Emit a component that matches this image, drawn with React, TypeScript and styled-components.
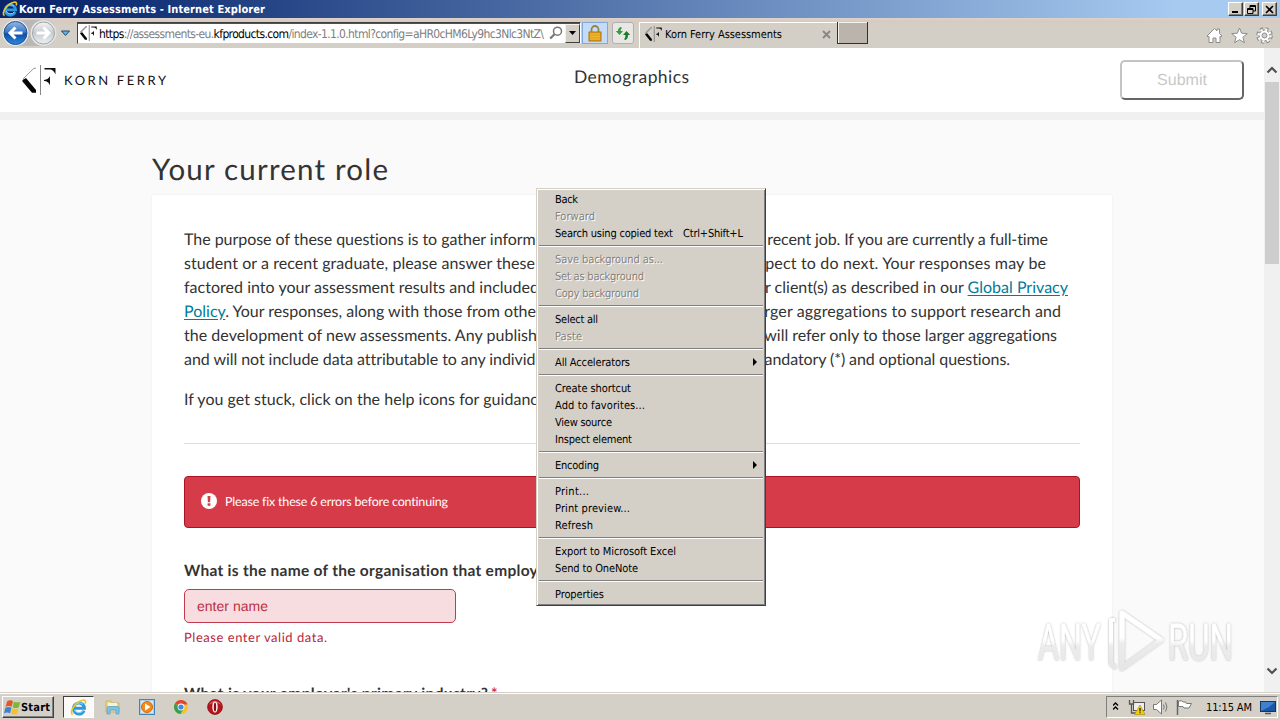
import React, { FC, ReactNode, useLayoutEffect, useRef, useState } from "react";
import styled, { createGlobalStyle, css } from "styled-components";

const GlobalStyle = createGlobalStyle`
  * {
    box-sizing: border-box;
  }
  body {
    margin: 0;
    overflow: hidden;
    text-rendering: geometricPrecision;
  }
  svg {
    display: block;
    flex: none;
  }
`;

const uiFont = css`
  font-family: "DejaVu Sans Condensed", "DejaVu Sans", sans-serif;
  font-stretch: condensed;
`;

const pageFont = css`
  font-family: Lato, sans-serif;
`;

const FitText = styled.span`
  display: inline-block;
  white-space: pre;
`;

interface FitProps {
  width: number;
  children: ReactNode;
}

// Tracks the text out (or in) until it is exactly `width` wide.
const Fit: FC<FitProps> = ({ width, children }) => {
  const ref = useRef<HTMLSpanElement>(null);
  const [spacing, setSpacing] = useState(0);

  useLayoutEffect(() => {
    const el = ref.current;
    if (!el) return;
    el.style.letterSpacing = "0px";
    const count = (el.textContent || "").length;
    const value = (width - el.getBoundingClientRect().width) / (count - 1);
    el.style.letterSpacing = `${value}px`;
    setSpacing(value);
  }, [width]);

  return (
    <FitText
      ref={ref}
      style={{ letterSpacing: spacing, marginRight: -spacing }}
    >
      {children}
    </FitText>
  );
};

const Screen = styled.div`
  position: relative;
  width: 1280px;
  height: 720px;
  display: flex;
  flex-direction: column;
  overflow: hidden;
  background: #d4d0c8;
`;

/* title bar */

const TitleBar = styled.div`
  height: 18px;
  flex: none;
  display: flex;
  align-items: center;
  padding: 0 3px 0 2px;
  color: #fff;
  background: linear-gradient(90deg, #0a246a 0%, #0e2c72 8%, #a6caf0 92%);
  ${uiFont}
  font-size: 11px;
  font-weight: 700;
`;

const TitleText = styled.div`
  flex: 1;
  margin-left: 1px;
`;

const WindowButton = styled.div<{ gap?: number }>`
  width: 15px;
  height: 14px;
  margin-left: ${({ gap = 0 }) => gap}px;
  display: flex;
  align-items: center;
  justify-content: center;
  background: #d4d0c8;
  border: 1px solid;
  border-color: #fff #404040 #404040 #fff;
  box-shadow: inset -1px -1px 0 #808080;
`;

/* toolbar */

const Toolbar = styled.div`
  height: 30px;
  flex: none;
  display: flex;
  align-items: flex-start;
  padding: 4px 7px 0 2px;
  background: linear-gradient(#dcd3cb 0, #d8cac0 3px, #d4cfc6 9px, #d4cfc6);
  ${uiFont}
  font-size: 11px;
`;

const NavButtons = styled.div`
  width: 75px;
  margin-top: -3px;
`;

const AddressBar = styled.div`
  width: 504px;
  height: 22px;
  display: flex;
  align-items: center;
  padding-left: 2px;
  background: #fff;
  border: 1px solid;
  border-color: #404040 #fff #d4d0c8 #404040;
  box-shadow: inset 0 1px 0 #5b4a5c;
  font-size: 12px;
`;

const Url = styled.div`
  flex: 1;
  margin-left: 2px;
  padding-top: 1px;
  color: #808080;
  b {
    color: #000;
    font-weight: 400;
  }
`;

const DropButton = styled.div`
  width: 15px;
  height: 19px;
  margin-left: 2px;
  display: flex;
  align-items: center;
  justify-content: center;
  background: #d4d0c8;
  border: 1px solid;
  border-color: #f4f2ee #404040 #404040 #f4f2ee;
`;

const ToolButton = styled.div<{ active?: boolean }>`
  width: ${({ active }) => (active ? 26 : 22)}px;
  height: 22px;
  margin-left: ${({ active }) => (active ? 1 : 4)}px;
  display: flex;
  align-items: center;
  justify-content: center;
  background: ${({ active }) => (active ? "#c4dcf8" : "#e9e7e3")};
  border: 1px solid ${({ active }) => (active ? "#7fa9dc" : "#aeb0b4")};
  border-radius: ${({ active }) => (active ? 0 : 3)}px;
`;

const Tab = styled.div`
  width: 198px;
  height: 26px;
  margin-left: 5px;
  padding: 0 6px 3px 5px;
  display: flex;
  align-items: center;
  border-top: 1px solid #fff;
  border-left: 1px solid #fff;
`;

const TabTitle = styled.div`
  flex: 1;
  margin-left: 3px;
`;

const NewTab = styled.div`
  width: 31px;
  height: 22px;
  background: #bab4ac;
  border: solid #303030;
  border-width: 0 1px 1px 1px;
  box-shadow: inset 1px 1px 0 #f4f0ea;
`;

const ToolIcons = styled.div`
  margin-left: auto;
  margin-top: 5px;
  display: flex;
  gap: 8px;
`;

/* page */

const Viewport = styled.div`
  height: 644px;
  flex: none;
  display: flex;
  overflow: hidden;
  background: #fafafa;
`;

const Page = styled.div`
  width: 1264px;
  color: #333;
  ${pageFont}
`;

const PageHeader = styled.div`
  height: 72px;
  display: grid;
  grid-template-columns: 1fr 116px 1fr;
  align-items: center;
  padding: 0 20px 0 22px;
  background: #fff;
  border-bottom: 8px solid #f0f0f0;
`;

const Brand = styled.div`
  display: flex;
  align-items: center;
  margin-top: -1px;
  color: #111;
  font-size: 13px;
`;

const BrandName = styled.div`
  margin-left: 8px;
`;

const PageTitle = styled.div`
  margin: -7px 0 0 -1px;
  font-size: 17.5px;
  color: #333;
`;

const SubmitButton = styled.div`
  width: 124px;
  height: 40px;
  justify-self: end;
  display: flex;
  align-items: center;
  justify-content: center;
  padding-top: 1px;
  border: 2px solid;
  border-color: #c4c4c4 #666 #666 #c4c4c4;
  border-radius: 5px;
  color: #c8c8c8;
  font-family: "Liberation Sans", sans-serif;
  font-size: 16px;
`;

const Section = styled.div`
  width: 960px;
  margin-left: 152px;
`;

const Heading = styled.h1`
  height: 75px;
  margin: 0;
  padding-top: 31px;
  font-size: 29.5px;
  line-height: 38px;
  font-weight: 400;
`;

const Card = styled.div`
  height: 560px;
  padding: 33px 32px 0;
  background: #fff;
  box-shadow: 0 0 3px rgba(0, 0, 0, 0.06);
`;

const Line = styled.div<{ width: number }>`
  width: ${({ width }) => width}px;
  height: 24px;
  display: flex;
  justify-content: space-between;
  font-size: 16px;
  line-height: 24px;
  white-space: pre;
`;

const Link = styled.a`
  color: #007b9a;
  text-decoration: underline;
  text-underline-offset: 2px;
`;

const Divider = styled.div`
  height: 1px;
  margin: 31px 0 32px;
  background: #ddd;
`;

const Alert = styled.div`
  height: 52px;
  display: flex;
  align-items: center;
  padding: 0 16px 3px;
  color: #fff;
  background: #d63b49;
  border: 1px solid #ab1323;
  border-radius: 4px;
  font-size: 12.5px;
`;

const AlertText = styled.div`
  margin-left: 8px;
  padding-top: 2px;
`;

const Label = styled.div<{ top: number }>`
  margin-top: ${({ top }) => top}px;
  font-size: 15.5px;
  line-height: 20px;
  font-weight: 700;
  white-space: pre;
`;

const Required = styled.span`
  margin-left: 3px;
  color: #d63b49;
`;

const Field = styled.div`
  width: 272px;
  height: 34px;
  margin-top: 8px;
  padding: 0 12px;
  display: flex;
  align-items: center;
  color: #bc3043;
  background: #f8dde0;
  border: 1px solid #c23a4d;
  border-radius: 5px;
  font-family: "Liberation Sans", sans-serif;
  font-size: 14px;
`;

const FieldError = styled.div`
  margin-top: 4px;
  color: #b8273a;
  font-size: 13px;
  line-height: 20px;
`;

/* scroll bar */

const ScrollBar = styled.div`
  width: 16px;
  padding: 18px 0 17px;
  display: flex;
  flex-direction: column;
  align-items: center;
  background: #f0f0f0;
`;

const Thumb = styled.div`
  width: 14px;
  height: 182px;
  margin-top: 8px;
  margin-bottom: auto;
  background: #cdcdcd;
`;

/* context menu */

const Menu = styled.div`
  position: absolute;
  left: 536px;
  top: 188px;
  width: 230px;
  height: 418px;
  padding: 1px;
  background: #d4d0c8;
  border: 1px solid;
  border-color: #d4d0c8 #404040 #404040 #d4d0c8;
  box-shadow: inset 1px 1px 0 #fff, inset -1px -1px 0 #808080;
  color: #000;
  ${uiFont}
  font-size: 11px;
`;

const MenuBody = styled.div`
  padding-top: 1px;
`;

const MenuItem = styled.div<{ disabled?: boolean }>`
  height: 17px;
  padding: 0 7px 0 17px;
  display: flex;
  align-items: center;
  gap: 10px;
  line-height: 17px;
  ${({ disabled }) =>
    disabled &&
    css`
      color: #85827d;
      text-shadow: 1px 1px 0 #fff;
    `}
`;

const MenuArrow = styled.div`
  margin: -2px 0 0 auto;
  border: 4px solid transparent;
  border-left: 4px solid #000;
  border-right: 0;
`;

const MenuSeparator = styled.div`
  height: 2px;
  margin: 3px 1px 4px;
  border-top: 1px solid #808080;
  border-bottom: 1px solid #fff;
`;

/* taskbar */

const Taskbar = styled.div`
  height: 28px;
  display: flex;
  align-items: flex-start;
  padding: 3px 2px 0;
  background: #d4d0c8;
  border-top: 1px solid #d4d0c8;
  box-shadow: inset 0 1px 0 #fff;
  ${uiFont}
  font-size: 11px;
`;

const StartButton = styled.div`
  width: 52px;
  height: 22px;
  display: flex;
  align-items: center;
  padding-left: 1px;
  font-weight: 700;
  border: 1px solid;
  border-color: #fff #404040 #404040 #fff;
  box-shadow: inset -1px -1px 0 #808080;
`;

const QuickLaunch = styled.div`
  margin-left: 9px;
  display: flex;
  align-items: center;
  gap: 18px;
`;

const ActiveTask = styled.div`
  width: 31px;
  height: 22px;
  margin-right: -7px;
  display: flex;
  align-items: center;
  justify-content: center;
  background: #fbfaf8;
  border: 1px solid;
  border-color: #404040 #fff #fff #404040;
`;

const Tray = styled.div`
  width: 172px;
  height: 22px;
  margin-left: auto;
  padding: 0 2px 0 6px;
  display: flex;
  align-items: center;
  border: 1px solid;
  border-color: #808080 #fff #fff #808080;
`;

const Clock = styled.div`
  width: 47px;
  margin: 0 8px 0 9px;
`;

const WatermarkBox = styled.div`
  position: absolute;
  left: 1030px;
  top: 604px;
`;

/* icons */

const IeIcon: FC<{ size: number }> = ({ size }) => (
  <svg width={size} height={size} viewBox="0 0 16 16" fill="none">
    <path
      d="M13.2 11A5.2 5.2 0 1 1 13.6 8.8H4.2"
      stroke="#2f97dc"
      strokeWidth="2.8"
    />
    <path
      d="M12.5 10.8A4.9 4.9 0 0 1 4 10M4 7a5 5 0 0 1 8-2"
      stroke="#8ad6fa"
      strokeWidth="1"
    />
    <path
      d="M2.5 14.6C-1.5 12.5 5.5 2.2 12 1.2c2.8-.4 3 1.4 2.1 3.3"
      stroke="#efc42e"
      strokeWidth="1.6"
    />
  </svg>
);

interface KfMarkProps {
  width: number;
  height: number;
}

const KfMark: FC<KfMarkProps> = ({ width, height }) => (
  <svg
    width={width}
    height={height}
    viewBox="0 0 34 30"
    preserveAspectRatio="none"
  >
    <path d="M.5 15L4 13l10 12v2.800h-4L.5 16.500z" fill="#050505" />
    <path d="M1 14L12 3.200h2" stroke="#999" strokeWidth={width > 20 ? 1 : 3} fill="none" />
    <path d="M18.500 0v30" stroke="#888" strokeWidth={width > 20 ? 1 : 2} />
    <path d="M22.500 3H33.500v6.500q-2-4.500-5-5h-6z" fill="#111" />
    <path d="M22 15q4.500-.5 6-4v9.500q-1.500-4.500-6-4.500z" fill="#111" />
  </svg>
);

const NavIcon = () => (
  <svg width="72" height="28" viewBox="0 0 72 28">
    <defs>
      <linearGradient id="back" x1="0" y1="0" x2="0" y2="1">
        <stop offset="0" stopColor="#91b8e5" />
        <stop offset=".46" stopColor="#3a78c8" />
        <stop offset=".54" stopColor="#0e4ba6" />
        <stop offset="1" stopColor="#2b8de0" />
      </linearGradient>
      <linearGradient id="forward" x1="0" y1="0" x2="0" y2="1">
        <stop offset="0" stopColor="#f4f5f6" />
        <stop offset=".5" stopColor="#c6cbd1" />
        <stop offset="1" stopColor="#eef1f4" />
      </linearGradient>
    </defs>
    <path d="M13 1h28q13 0 13 13T41 27H13z" fill="#b9b8b7" />
    <circle cx="13.500" cy="14" r="13" fill="#e9edf2" />
    <circle cx="41.500" cy="14" r="13" fill="#e4e4e4" />
    <circle cx="13.500" cy="14" r="11.500" fill="url(#back)" stroke="#274f8c" />
    <circle cx="41.500" cy="14" r="11" fill="url(#forward)" stroke="#a0a3a8" />
    <path
      d="M20.500 14H8M13.500 8.500L8 14l5.500 5.500"
      stroke="#fff"
      strokeWidth="3"
      fill="none"
    />
    <path
      d="M34.500 14h12M41.500 8.500l5.500 5.500-5.500 5.500"
      stroke="#fff"
      strokeWidth="3"
      fill="none"
    />
    <path d="M59.500 12h8l-4 4.500z" fill="#5fb5e8" stroke="#25496e" />
  </svg>
);

const SearchIcon = () => (
  <svg width="14" height="14" viewBox="0 0 14 14" fill="none" stroke="#777">
    <circle cx="8.500" cy="5.200" r="4" strokeWidth="1.500" />
    <path d="M5.500 8.200L1.200 12.600" strokeWidth="2.200" />
  </svg>
);

const LockIcon = () => (
  <svg width="14" height="17" viewBox="0 0 14 17">
    <path
      d="M3.500 8V4.500a3.500 3.500 0 0 1 7 0V8"
      fill="none"
      stroke="#9b8348"
      strokeWidth="1.800"
    />
    <rect x="1" y="7" width="12" height="9" fill="#e8a317" stroke="#a87415" />
    <path d="M2 9h10M2 11.500h10M2 14h10" stroke="#f4bf3c" strokeWidth=".8" />
  </svg>
);

const RefreshIcon = () => (
  <svg width="16" height="16" viewBox="0 0 16 16">
    <path d="M6 2q-3 .5-3 4H.8L4.500 10 8 6H5.500Q5.500 4 7 3z" fill="#2f9e3d" />
    <path d="M10 15q3-.5 3-5h2.200L11.500 6 8 10h2.500q0 3-1.500 4z" fill="#177d28" />
  </svg>
);

const HomeIcon = () => (
  <svg width="17" height="17" viewBox="0 0 17 17">
    <path
      d="M1 9l7.500-7.500L11 4V2h2.500v4.500L16 9l-1.200 1L14 9.300V15.500h-4V11H7v4.500H3V9.300L2.200 10z"
      fill="#fff"
      stroke="#8c8c8c"
    />
  </svg>
);

const StarIcon = () => (
  <svg width="17" height="17" viewBox="0 0 17 17">
    <path
      d="M8.500 1l2.100 5.200 5.700.4-4.400 3.600 1.500 5.500-4.900-3-4.900 3 1.500-5.500L.7 6.600l5.700-.4z"
      fill="#fff"
      stroke="#8c8c8c"
    />
  </svg>
);

const GearIcon = () => (
  <svg width="17" height="17" viewBox="0 0 17 17" fill="none">
    <circle cx="8.500" cy="8.500" r="6.500" stroke="#8c8c8c" strokeWidth="3.600" strokeDasharray="3 2.105" />
    <circle cx="8.500" cy="8.500" r="5.400" fill="#fff" stroke="#8c8c8c" strokeWidth="1" />
    <circle cx="8.500" cy="8.500" r="6" stroke="#fff" strokeWidth="2.400" strokeDasharray="2 2.712" />
    <circle cx="8.500" cy="8.500" r="2.500" fill="#d4cfc6" stroke="#8c8c8c" />
  </svg>
);

const Chevron: FC<{ down?: boolean }> = ({ down }) => (
  <svg width="12" height="8" viewBox="0 0 12 8">
    <path
      d={down ? "M1.500 1.500L6 6l4.500-4.500" : "M1.500 6.500L6 2l4.500 4.500"}
      fill="none"
      stroke="#505050"
      strokeWidth="2.200"
    />
  </svg>
);

const AlertIcon = () => (
  <svg width="16" height="16" viewBox="0 0 16 16">
    <circle cx="8" cy="8" r="8" fill="#fff" />
    <path d="M6.500 3h3l-.4 6.200H6.900z" fill="#d63b49" />
    <rect x="6.600" y="10.300" width="2.800" height="2.500" fill="#d63b49" />
  </svg>
);

const WindowsIcon = () => (
  <svg width="17" height="17" viewBox="0 0 16 16">
    <path d="M3 2q3-1.500 5.500 0L7.200 7.300Q4.500 6 1.500 7.300z" fill="#e5562d" />
    <path d="M9.300 2.500q3 1.300 6 0L13.800 8q-3 1.200-5.700-.3z" fill="#7db73a" />
    <path d="M1.300 8.200q3-1.300 5.700 0L5.700 13.300Q3 12 0 13.300z" fill="#3c82cf" />
    <path d="M7.900 8.600q3 1.300 5.800.3L12.300 14q-3 1.200-5.700-.3z" fill="#f3c22e" />
  </svg>
);

const FolderIcon = () => (
  <svg width="16" height="16" viewBox="0 0 16 16">
    <path d="M1 2h5l1 2h7v9H1z" fill="#ecd98c" stroke="#cdb566" />
    <path d="M3 4h9v3H3z" fill="#f9f3cf" />
    <path d="M2 15V9q0-1.500 1.500-1.500h9Q14 7.500 14 9v6h-3v-4H5v4z" fill="#7cc2ec" stroke="#4f9dce" strokeWidth=".7" />
  </svg>
);

const MediaIcon = () => (
  <svg width="16" height="16" viewBox="0 0 16 16">
    <rect x=".5" y=".5" width="15" height="15" fill="#a9cdea" stroke="#4284bc" />
    <rect x="2" y="2" width="12" height="12" fill="#d6e8f5" />
    <circle cx="8" cy="8" r="5.500" fill="#f28a18" stroke="#d66b0b" />
    <path d="M6 4.500v7L11.500 8z" fill="#fff" />
  </svg>
);

const ChromeIcon = () => (
  <svg width="16" height="16" viewBox="0 0 16 16">
    <circle cx="8" cy="8" r="7" fill="#f4c430" />
    <path d="M8 8L1.900 4.500A7 7 0 0 1 14.500 5.500H8z" fill="#df4637" />
    <path d="M1.900 4.500A7 7 0 0 0 7.500 15L10.500 10z" fill="#34a151" />
    <circle cx="8" cy="8" r="3.400" fill="#fff" />
    <circle cx="8" cy="8" r="2.600" fill="#4385ec" />
  </svg>
);

const OperaIcon = () => (
  <svg width="16" height="16" viewBox="0 0 16 16">
    <circle cx="8" cy="8" r="7.400" fill="#b8141c" stroke="#8a0d14" strokeWidth=".8" />
    <path d="M2 5.500Q8-2 14 5.500 8 3 2 5.500z" fill="#e05a5a" />
    <ellipse cx="8" cy="8" rx="2.700" ry="5.600" fill="#fff" />
    <ellipse cx="8" cy="8" rx="1.200" ry="4.600" fill="#8e0c14" />
  </svg>
);

const TrayIcons = () => (
  <svg width="84" height="20" viewBox="0 0 84 20">
    <path
      d="M0 8.500l2.500-2.500L5 8.500M0 12.500L2.500 10 5 12.500"
      fill="none"
      stroke="#000"
      strokeWidth="1.400"
    />
    <rect x="20.500" y="5.500" width="11" height="8" fill="#eee" stroke="#555" />
    <path d="M16.500 3v4h4V3M18.500 7v9h5" fill="none" stroke="#555" strokeWidth="1.300" />
    <path d="M27 8l5 9.500H21.500z" fill="#f5d000" stroke="#a58900" strokeWidth=".6" />
    <path d="M27 11v3.500M27 15.300v1" stroke="#111" strokeWidth="1.200" />
    <path d="M40.500 7.500h3l5-4.500v14l-5-4.500h-3z" fill="#fff" stroke="#777" />
    <path
      d="M50.500 7.500q1.500 2.500 0 5M52.500 5.500q3 4.500 0 9"
      fill="none"
      stroke="#777"
    />
    <path d="M64.500 3v15" stroke="#666" strokeWidth="1.500" />
    <path d="M65.500 4q3-1 5 1h2l1 1.500h5l-2.500 4.500h-5l-1-1.500h-4.500z" fill="#fff" stroke="#777" />
  </svg>
);

const MonitorIcon = () => (
  <svg width="16" height="15" viewBox="0 0 16 15">
    <rect x=".5" y="1.500" width="15" height="10" fill="#1b57a8" stroke="#16345f" />
    <path d="M1 11V2h14L9 7z" fill="#4080d0" />
    <path d="M5 13.500h6" stroke="#4b5866" strokeWidth="1.500" />
  </svg>
);

const Watermark = () => (
  <svg width="210" height="72" viewBox="0 0 210 72">
    <defs>
      <linearGradient id="mark" x1="0" y1="0" x2="0" y2="1">
        <stop offset="0.45" stopColor="#fff" />
        <stop offset="0.55" stopColor="#ececec" />
        <stop offset="1" stopColor="#e6e6e6" />
      </linearGradient>
      <filter id="glow" x="-10%" y="-10%" width="120%" height="120%">
        <feDropShadow dx="0" dy="0" stdDeviation="1.300" floodColor="#000" floodOpacity=".34" />
      </filter>
    </defs>
    <g filter="url(#glow)" fill="url(#mark)" fontFamily="Roboto, sans-serif" fontSize="51">
      <text x="8" y="56" textLength="63" lengthAdjust="spacingAndGlyphs">
        ANY
      </text>
      <text x="138" y="56" textLength="65" lengthAdjust="spacingAndGlyphs">
        RUN
      </text>
      <g fill="none" stroke="url(#mark)" strokeWidth="5" strokeLinejoin="round">
        <path d="M92 9l39 27-39 28V9z" />
        <path d="M85 16h-4v42q0 4 5 5" strokeWidth="4" />
      </g>
    </g>
  </svg>
);

/* data */

interface Entry {
  text: string;
  width: number;
  disabled?: boolean;
  shortcut?: string;
  submenu?: boolean;
}

const menuGroups: Entry[][] = [
  [
    { text: "Back", width: 23 },
    { text: "Forward", width: 40, disabled: true },
    { text: "Search using copied text", width: 118, shortcut: "Ctrl+Shift+L" },
  ],
  [
    { text: "Save background as...", width: 108, disabled: true },
    { text: "Set as background", width: 89, disabled: true },
    { text: "Copy background", width: 84, disabled: true },
  ],
  [
    { text: "Select all", width: 43 },
    { text: "Paste", width: 27, disabled: true },
  ],
  [{ text: "All Accelerators", width: 75, submenu: true }],
  [
    { text: "Create shortcut", width: 76 },
    { text: "Add to favorites...", width: 90 },
    { text: "View source", width: 57 },
    { text: "Inspect element", width: 77 },
  ],
  [{ text: "Encoding", width: 44, submenu: true }],
  [
    { text: "Print...", width: 34 },
    { text: "Print preview...", width: 75 },
    { text: "Refresh", width: 38 },
  ],
  [
    { text: "Export to Microsoft Excel", width: 121 },
    { text: "Send to OneNote", width: 83 },
  ],
  [{ text: "Properties", width: 49 }],
];

const ContextMenu = () => (
  <Menu>
    <MenuBody>
      {menuGroups.map((group, index) => (
        <React.Fragment key={group[0].text}>
          {index > 0 ? <MenuSeparator /> : null}
          {group.map((item) => (
            <MenuItem key={item.text} disabled={item.disabled}>
              <Fit width={item.width}>{item.text}</Fit>
              {item.shortcut ? <Fit width={60}>{item.shortcut}</Fit> : null}
              {item.submenu ? <MenuArrow /> : null}
            </MenuItem>
          ))}
        </React.Fragment>
      ))}
    </MenuBody>
  </Menu>
);

const Intro = () => (
  <>
    <Line width={864}>
      <Fit width={352}>The purpose of these questions is to gather inform</Fit>
      <Fit width={281}>recent job. If you are currently a full-time</Fit>
    </Line>
    <Line width={862}>
      <Fit width={351}>student or a recent graduate, please answer these</Fit>
      <Fit width={289}>xpect to do next. Your responses may be</Fit>
    </Line>
    <Line width={884}>
      <Fit width={355}>factored into your assessment results and included</Fit>
      <Fit width={303}>
        r client(s) as described in our <Link>Global Privacy</Link>
      </Fit>
    </Line>
    <Line width={877}>
      <Fit width={352}>
        <Link>Policy</Link>. Your responses, along with those from othe
      </Fit>
      <Fit width={297}>rger aggregations to support research and</Fit>
    </Line>
    <Line width={873}>
      <Fit width={353}>the development of new assessments. Any publish</Fit>
      <Fit width={293}>will refer only to those larger aggregations</Fit>
    </Line>
    <Line width={826}>
      <Fit width={351}>
        and will not include data attributable to any individ
      </Fit>
      <Fit width={246}>andatory (*) and optional questions.</Fit>
    </Line>
  </>
);

const Stuck = styled(Line)`
  margin-top: 16px;
`;

export default function App() {
  return (
    <Screen>
      <GlobalStyle />
      <TitleBar>
        <IeIcon size={16} />
        <TitleText>
          <Fit width={246}>Korn Ferry Assessments - Internet Explorer</Fit>
        </TitleText>
        <WindowButton>
          <svg width="9" height="9">
            <path d="M1 7h6" stroke="#000" strokeWidth="2" />
          </svg>
        </WindowButton>
        <WindowButton gap={1}>
          <svg width="9" height="9" fill="none" stroke="#000">
            <path d="M3 3V.5h5.500V6H6M3 1.500h5.500M.5 3.500h5.500v5H.5zM.5 4.500h5.500" />
          </svg>
        </WindowButton>
        <WindowButton gap={3}>
          <svg width="9" height="9">
            <path d="M1 1l7 7M8 1L1 8" stroke="#000" strokeWidth="1.600" />
          </svg>
        </WindowButton>
      </TitleBar>

      <Toolbar>
        <NavButtons>
          <NavIcon />
        </NavButtons>
        <AddressBar>
          <KfMark width={17} height={16} />
          <Url>
            <Fit width={445}>
              <b>https</b>://assessments-eu.<b>kfproducts.com</b>
              /index-1.1.0.html?config=aHR0cHM6Ly9hc3Nlc3NtZ\
            </Fit>
          </Url>
          <SearchIcon />
          <DropButton>
            <svg width="7" height="4">
              <path d="M0 0h7L3.500 4z" />
            </svg>
          </DropButton>
        </AddressBar>
        <ToolButton active>
          <LockIcon />
        </ToolButton>
        <ToolButton>
          <RefreshIcon />
        </ToolButton>
        <Tab>
          <KfMark width={17} height={16} />
          <TabTitle>
            <Fit width={117}>Korn Ferry Assessments</Fit>
          </TabTitle>
          <svg width="9" height="9">
            <path d="M1 1l7 7M8 1L1 8" stroke="#8c8782" strokeWidth="2" />
          </svg>
        </Tab>
        <NewTab />
        <ToolIcons>
          <HomeIcon />
          <StarIcon />
          <GearIcon />
        </ToolIcons>
      </Toolbar>

      <Viewport>
        <Page>
          <PageHeader>
            <Brand>
              <KfMark width={34} height={30} />
              <BrandName>
                <Fit width={102}>KORN FERRY</Fit>
              </BrandName>
            </Brand>
            <PageTitle>
              <Fit width={115}>Demographics</Fit>
            </PageTitle>
            <SubmitButton>Submit</SubmitButton>
          </PageHeader>
          <Section>
            <Heading>
              <Fit width={236}>Your current role</Fit>
            </Heading>
            <Card>
              <Intro />
              <Stuck width={353}>
                <Fit width={354}>
                  If you get stuck, click on the help icons for guidanc
                </Fit>
              </Stuck>
              <Divider />
              <Alert>
                <AlertIcon />
                <AlertText>
                  <Fit width={223}>
                    Please fix these 6 errors before continuing
                  </Fit>
                </AlertText>
              </Alert>
              <Label top={33}>
                <Fit width={354}>
                  What is the name of the organisation that employ
                </Fit>
              </Label>
              <Field>
                <Fit width={71}>enter name</Fit>
              </Field>
              <FieldError>
                <Fit width={143}>Please enter valid data.</Fit>
              </FieldError>
              <Label top={37}>
                <Fit width={304}>What is your employer's primary industry?</Fit>
                <Required>*</Required>
              </Label>
            </Card>
          </Section>
        </Page>
        <ScrollBar>
          <Chevron />
          <Thumb />
          <Chevron down />
        </ScrollBar>
      </Viewport>

      <Taskbar>
        <StartButton>
          <WindowsIcon />
          <Fit width={29}>Start</Fit>
        </StartButton>
        <QuickLaunch>
          <ActiveTask>
            <IeIcon size={17} />
          </ActiveTask>
          <FolderIcon />
          <MediaIcon />
          <ChromeIcon />
          <OperaIcon />
        </QuickLaunch>
        <Tray>
          <TrayIcons />
          <Clock>
            <Fit width={46}>11:15 AM</Fit>
          </Clock>
          <MonitorIcon />
        </Tray>
      </Taskbar>

      <WatermarkBox>
        <Watermark />
      </WatermarkBox>
      <ContextMenu />
    </Screen>
  );
}
